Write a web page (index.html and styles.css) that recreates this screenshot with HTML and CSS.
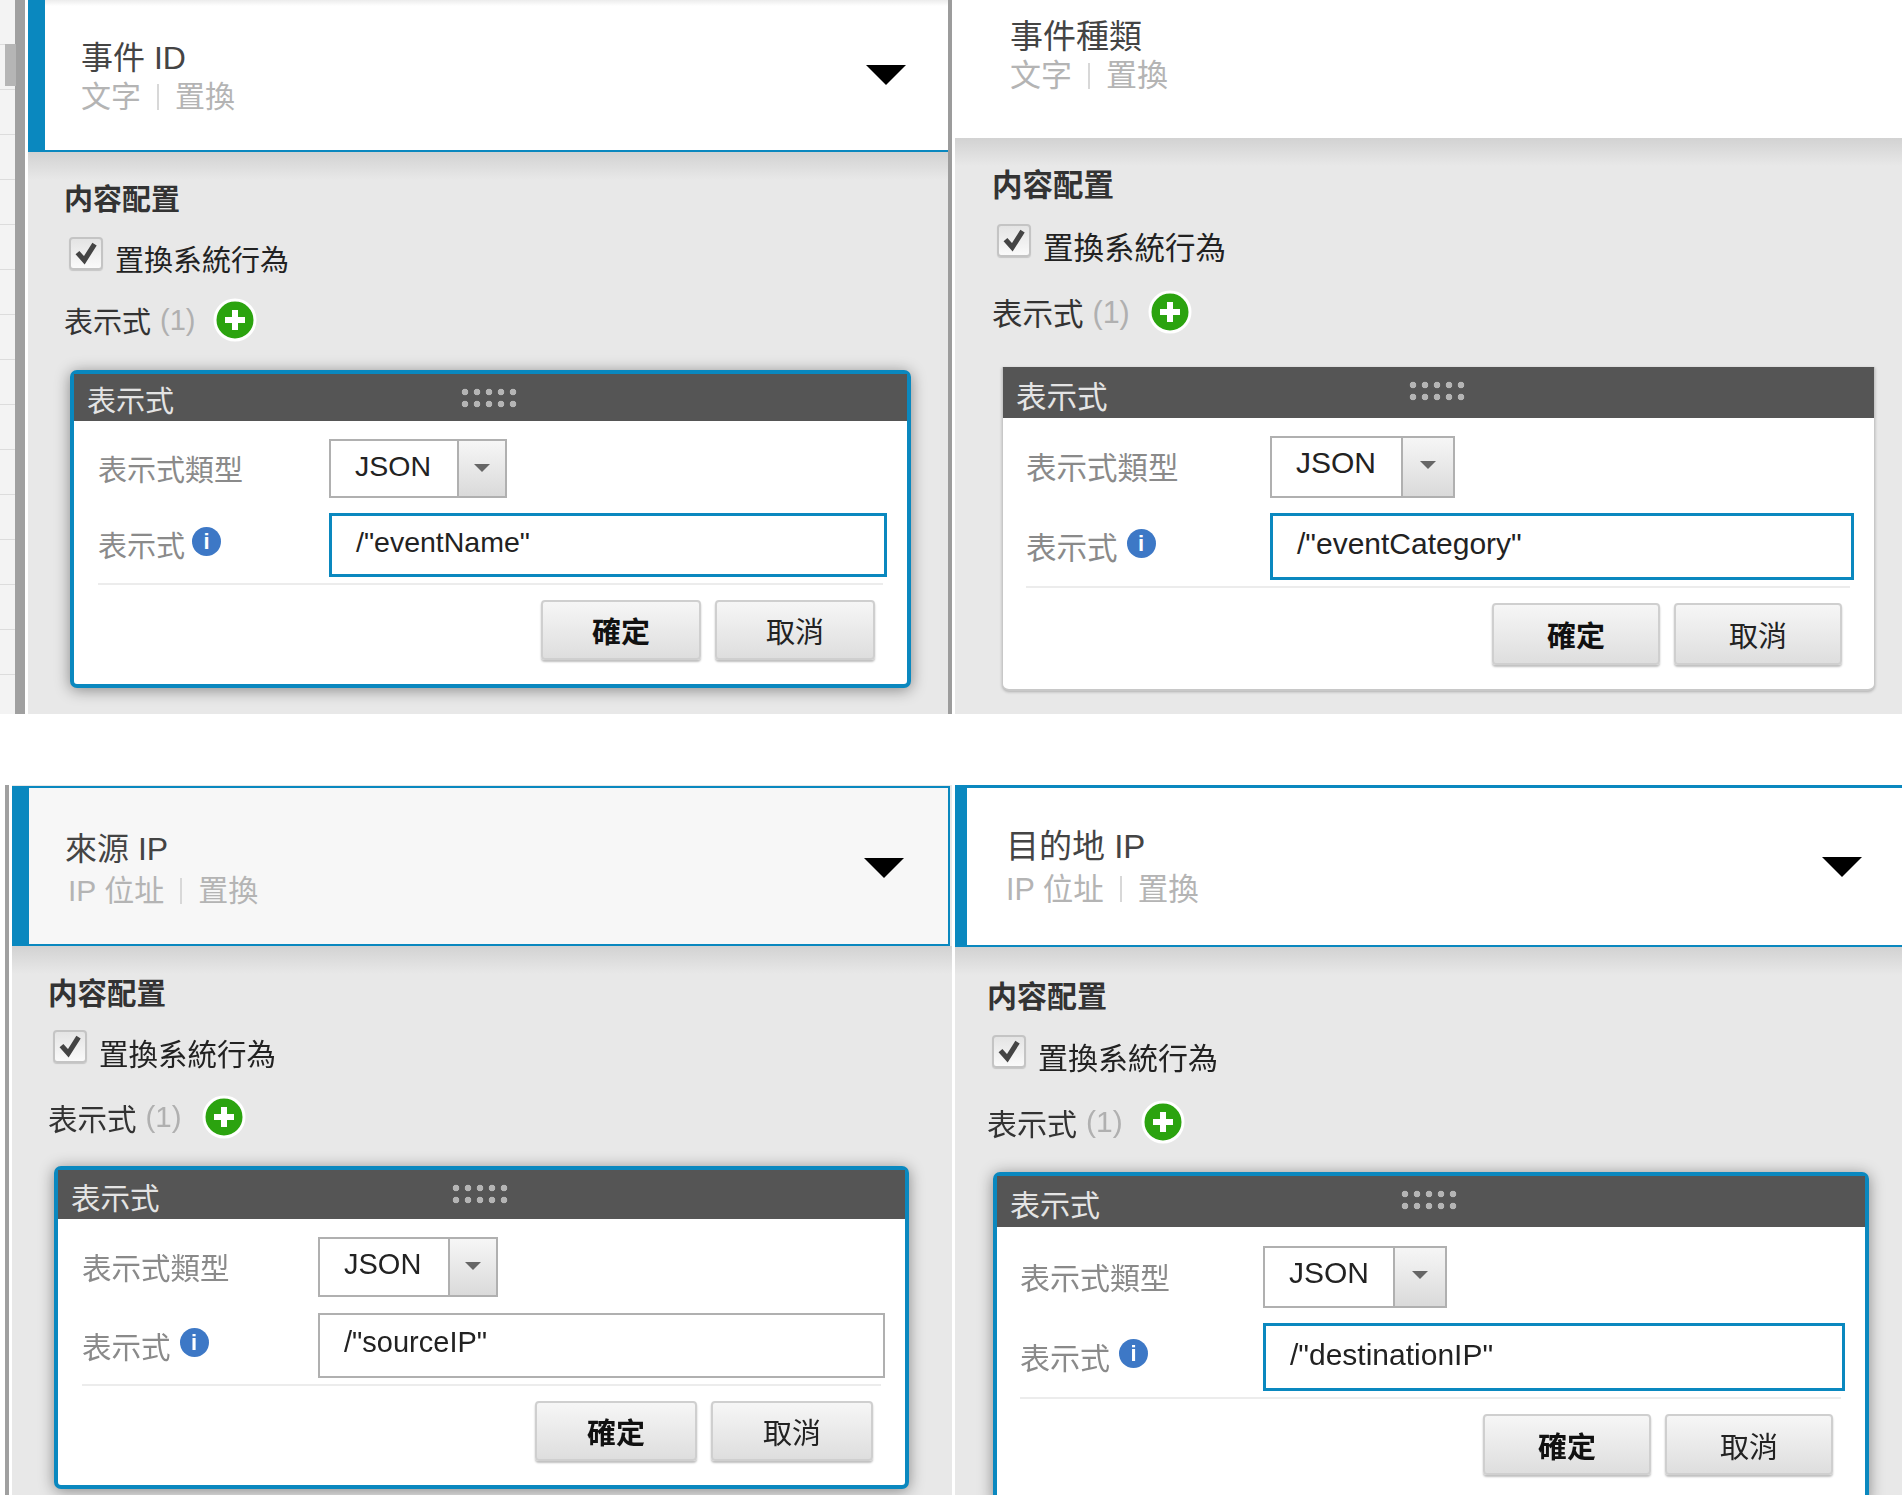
FILE: index.html
```html
<!DOCTYPE html>
<html lang="zh-Hant">
<head>
    <meta charset="UTF-8">
    <title>事件內容配置</title>
    <link rel="stylesheet" href="styles.css">
</head>
<body>
    <div class="page">
        <div class="cell cell-one">
            <div class="strip strip-table"></div>
            <section class="panel panel-one">
                <div class="panel-head">
                    <div class="head-text">
                        <div class="head-title">事件 ID</div>
                        <div class="head-sub"><span>文字</span><i></i><span>置換</span></div>
                    </div>
                    <div class="head-arrow"></div>
                </div>
                <div class="panel-body">
                    <div class="section-title">内容配置</div>
                    <div class="check-row">
                        <span class="check"><svg viewBox="0 0 34 34"><path d="M7 16l8 9L27 6" /></svg></span>
                        <span class="check-label">置換系統行為</span>
                    </div>
                    <div class="expr-row">
                        <span class="expr-label">表示式</span>
                        <span class="expr-count">(1)</span>
                        <button class="add-btn"><svg viewBox="0 0 44 44"><circle cx="22" cy="22" r="20" /><path d="M22 12v20M12 22h20" /></svg></button>
                    </div>
                    <div class="card">
                        <div class="card-head">
                            <span class="card-title">表示式</span>
                            <span class="grip"></span>
                        </div>
                        <div class="card-body">
                            <div class="form-row row-type">
                                <span class="form-label">表示式類型</span>
                                <div class="select"><span class="select-value">JSON</span><span class="select-btn"></span></div>
                            </div>
                            <div class="form-row row-expr">
                                <span class="form-label">表示式<span class="info">i</span></span>
                                <div class="field">/"eventName"</div>
                            </div>
                            <div class="form-divider"></div>
                            <div class="form-actions">
                                <button class="btn btn-primary">確定</button>
                                <button class="btn">取消</button>
                            </div>
                        </div>
                    </div>
                </div>
            </section>
        </div>

        <div class="cell cell-two">
            <section class="panel panel-two">
                <div class="panel-head">
                    <div class="head-text">
                        <div class="head-title">事件種類</div>
                        <div class="head-sub"><span>文字</span><i></i><span>置換</span></div>
                    </div>
                </div>
                <div class="panel-body">
                    <div class="section-title">内容配置</div>
                    <div class="check-row">
                        <span class="check"><svg viewBox="0 0 34 34"><path d="M7 16l8 9L27 6" /></svg></span>
                        <span class="check-label">置換系統行為</span>
                    </div>
                    <div class="expr-row">
                        <span class="expr-label">表示式</span>
                        <span class="expr-count">(1)</span>
                        <button class="add-btn"><svg viewBox="0 0 44 44"><circle cx="22" cy="22" r="20" /><path d="M22 12v20M12 22h20" /></svg></button>
                    </div>
                    <div class="card">
                        <div class="card-head">
                            <span class="card-title">表示式</span>
                            <span class="grip"></span>
                        </div>
                        <div class="card-body">
                            <div class="form-row row-type">
                                <span class="form-label">表示式類型</span>
                                <div class="select"><span class="select-value">JSON</span><span class="select-btn"></span></div>
                            </div>
                            <div class="form-row row-expr">
                                <span class="form-label">表示式<span class="info">i</span></span>
                                <div class="field">/"eventCategory"</div>
                            </div>
                            <div class="form-divider"></div>
                            <div class="form-actions">
                                <button class="btn btn-primary">確定</button>
                                <button class="btn">取消</button>
                            </div>
                        </div>
                    </div>
                </div>
            </section>
        </div>

        <div class="cell cell-three">
            <div class="strip strip-line"></div>
            <section class="panel panel-three">
                <div class="panel-head">
                    <div class="head-text">
                        <div class="head-title">來源 IP</div>
                        <div class="head-sub"><span>IP 位址</span><i></i><span>置換</span></div>
                    </div>
                    <div class="head-arrow"></div>
                </div>
                <div class="panel-body">
                    <div class="section-title">内容配置</div>
                    <div class="check-row">
                        <span class="check"><svg viewBox="0 0 34 34"><path d="M7 16l8 9L27 6" /></svg></span>
                        <span class="check-label">置換系統行為</span>
                    </div>
                    <div class="expr-row">
                        <span class="expr-label">表示式</span>
                        <span class="expr-count">(1)</span>
                        <button class="add-btn"><svg viewBox="0 0 44 44"><circle cx="22" cy="22" r="20" /><path d="M22 12v20M12 22h20" /></svg></button>
                    </div>
                    <div class="card">
                        <div class="card-head">
                            <span class="card-title">表示式</span>
                            <span class="grip"></span>
                        </div>
                        <div class="card-body">
                            <div class="form-row row-type">
                                <span class="form-label">表示式類型</span>
                                <div class="select"><span class="select-value">JSON</span><span class="select-btn"></span></div>
                            </div>
                            <div class="form-row row-expr">
                                <span class="form-label">表示式<span class="info">i</span></span>
                                <div class="field">/"sourceIP"</div>
                            </div>
                            <div class="form-divider"></div>
                            <div class="form-actions">
                                <button class="btn btn-primary">確定</button>
                                <button class="btn">取消</button>
                            </div>
                        </div>
                    </div>
                </div>
            </section>
        </div>

        <div class="cell cell-four">
            <section class="panel panel-four">
                <div class="panel-head">
                    <div class="head-text">
                        <div class="head-title">目的地 IP</div>
                        <div class="head-sub"><span>IP 位址</span><i></i><span>置換</span></div>
                    </div>
                    <div class="head-arrow"></div>
                </div>
                <div class="panel-body">
                    <div class="section-title">内容配置</div>
                    <div class="check-row">
                        <span class="check"><svg viewBox="0 0 34 34"><path d="M7 16l8 9L27 6" /></svg></span>
                        <span class="check-label">置換系統行為</span>
                    </div>
                    <div class="expr-row">
                        <span class="expr-label">表示式</span>
                        <span class="expr-count">(1)</span>
                        <button class="add-btn"><svg viewBox="0 0 44 44"><circle cx="22" cy="22" r="20" /><path d="M22 12v20M12 22h20" /></svg></button>
                    </div>
                    <div class="card">
                        <div class="card-head">
                            <span class="card-title">表示式</span>
                            <span class="grip"></span>
                        </div>
                        <div class="card-body">
                            <div class="form-row row-type">
                                <span class="form-label">表示式類型</span>
                                <div class="select"><span class="select-value">JSON</span><span class="select-btn"></span></div>
                            </div>
                            <div class="form-row row-expr">
                                <span class="form-label">表示式<span class="info">i</span></span>
                                <div class="field">/"destinationIP"</div>
                            </div>
                            <div class="form-divider"></div>
                            <div class="form-actions">
                                <button class="btn btn-primary">確定</button>
                                <button class="btn">取消</button>
                            </div>
                        </div>
                    </div>
                </div>
            </section>
        </div>
    </div>
</body>
</html>
```

FILE: styles.css
```css
html, body {
    margin: 0;
    height: 100%;
    background: #ffffff;
    overflow: hidden;
}
body {
    font-family: "Liberation Sans", "Noto Sans CJK TC", sans-serif;
    color: #222222;
}
.page {
    display: grid;
    grid-template-columns: 955px 947px;
    grid-template-rows: 714px 710px;
    row-gap: 71px;
    width: 1902px;
    filter: blur(0.55px);
}
.cell {
    display: flex;
    min-width: 0;
    overflow: hidden;
}

/* each panel was captured at a slightly different zoom, so sizes live here */
.panel-one {
    --fs: 29px;
    --title-fs: 32px;
    --sub-fs: 30px;
    --val-fs: 28.5px;
    --val-lh: 52px;
    --sub-gap: 4px;
    --bar: 17px;
    --head-h: 152px;
    --head-pad: 36px;
    --body-top: 33px;
    --body-left: 36px;
    --check-gap: 23px;
    --expr-gap: 26px;
    --card-gap: 30px;
    --card-left: 6px;
    --card-w: 841px;
    --card-head: 47px;
    --form-left: 24px;
    --form-top: 18px;
    --label-w: 231px;
    --select-w: 178px;
    --select-btn: 46px;
    --info-gap: 7px;
    --row-a: 59px;
    --row-b: 64px;
    --btn-w: 160px;
    --btn-h: 60px;
    --arrow-right: 42px;
    --add-left: 18px;
    width: 920px;
}
.panel-two {
    --fs: 30.5px;
    --title-fs: 33px;
    --sub-fs: 31px;
    --val-fs: 30px;
    --val-lh: 56px;
    --sub-gap: 4px;
    --bar: 0px;
    --head-h: 138px;
    --head-pad: 55px;
    --body-top: 32px;
    --body-left: 37px;
    --check-gap: 25px;
    --expr-gap: 31px;
    --card-gap: 35px;
    --card-left: 10px;
    --card-w: 873px;
    --card-head: 51px;
    --form-left: 23px;
    --form-top: 18px;
    --label-w: 244px;
    --select-w: 185px;
    --select-btn: 50px;
    --info-gap: 9px;
    --row-a: 62px;
    --row-b: 67px;
    --btn-w: 168px;
    --btn-h: 62px;
    --arrow-right: 0px;
    --add-left: 18px;
    width: 947px;
}
.panel-three {
    --fs: 29.5px;
    --title-fs: 32px;
    --sub-fs: 30px;
    --val-fs: 29px;
    --val-lh: 55px;
    --sub-gap: 7px;
    --bar: 17px;
    --head-h: 160px;
    --head-pad: 36px;
    --body-top: 33px;
    --body-left: 36px;
    --check-gap: 22px;
    --expr-gap: 30px;
    --card-gap: 29px;
    --card-left: 6px;
    --card-w: 855px;
    --card-head: 49px;
    --form-left: 24px;
    --form-top: 18px;
    --label-w: 236px;
    --select-w: 180px;
    --select-btn: 46px;
    --info-gap: 9px;
    --row-a: 60px;
    --row-b: 65px;
    --btn-w: 162px;
    --btn-h: 60px;
    --arrow-right: 44px;
    --add-left: 20px;
    width: 943px;
}
.panel-four {
    --fs: 30px;
    --title-fs: 33px;
    --sub-fs: 30.5px;
    --val-fs: 30px;
    --val-lh: 58px;
    --sub-gap: 7px;
    --bar: 12px;
    --head-h: 162px;
    --head-pad: 39px;
    --body-top: 35px;
    --body-left: 32px;
    --check-gap: 24px;
    --expr-gap: 30px;
    --card-gap: 30px;
    --card-left: 6px;
    --card-w: 876px;
    --card-head: 51px;
    --form-left: 23px;
    --form-top: 19px;
    --label-w: 243px;
    --select-w: 184px;
    --select-btn: 50px;
    --info-gap: 9px;
    --row-a: 62px;
    --row-b: 68px;
    --btn-w: 168px;
    --btn-h: 61px;
    --arrow-right: 40px;
    --add-left: 18px;
    width: 947px;
}

.strip {
    flex: none;
}
.strip-table {
    width: 25px;
    margin-right: 3px;
    background:
        linear-gradient(#b5b5b5, #b5b5b5) 5px 44px / 11px 42px no-repeat,
        linear-gradient(#a0a0a0, #a0a0a0) 15px 0 / 10px 100% no-repeat,
        repeating-linear-gradient(#f3f3f3 0 44px, #dcdcdc 44px 45px);
}
.strip-line {
    width: 9px;
    margin-right: 3px;
    background: linear-gradient(#a0a0a0, #a0a0a0) 5px 0 / 4px 100% no-repeat;
}
.cell-one {
    box-sizing: border-box;
    width: 952px;
    border-right: 4px solid #9c9c9c;
}
.cell-two {
    grid-column: 2;
}
.cell-three {
    width: 952px;
}

.panel {
    display: flex;
    flex-direction: column;
    flex: none;
    background: #e8e8e8;
}
.panel-head {
    display: flex;
    align-items: center;
    justify-content: space-between;
    box-sizing: border-box;
    flex: none;
    height: var(--head-h);
    padding-left: var(--head-pad);
    padding-right: var(--arrow-right);
    background: #ffffff;
    border-left: var(--bar) solid #0a88bf;
    border-bottom: 2px solid #0a88bf;
}
.panel-one .panel-head {
    background: linear-gradient(#ececec, #ffffff 6px);
}
.panel-two .panel-head {
    align-items: flex-start;
    padding-top: 19px;
    border-bottom: 0;
    box-shadow: 0 1px 2px rgba(0, 0, 0, 0.3);
}
.panel-three .panel-head {
    margin: 1px 5px 0 0;
    background: #f7f7f7;
    border: 2px solid #0a88bf;
    border-left: var(--bar) solid #0a88bf;
}
.panel-four .panel-head {
    border-top: 3px solid #0a88bf;
}
.head-text {
    padding-top: var(--sub-gap);
}
.panel-two .head-text {
    padding-top: 0;
}
.panel-four .head-text {
    margin-top: -5px;
}
.head-title {
    font-size: var(--title-fs);
    line-height: 36px;
    color: #444444;
}
.head-sub {
    display: flex;
    align-items: center;
    margin-top: var(--sub-gap);
    font-size: var(--sub-fs);
    line-height: 34px;
    color: #b4b4b4;
}
.panel-three .head-sub {
    margin-left: 3px;
}
.head-sub i {
    width: 2px;
    height: 26px;
    margin: 0 16px;
    background: #d8d8d8;
}
.head-arrow {
    width: 0;
    height: 0;
    border-left: 20px solid transparent;
    border-right: 20px solid transparent;
    border-top: 20px solid #000000;
}
.panel-three .head-arrow {
    margin-top: 3px;
}

.panel-body {
    flex: 1;
    padding: var(--body-top) 0 0 var(--body-left);
    background: linear-gradient(#d2d2d2, #e8e8e8 28px);
}
.section-title {
    font-size: var(--fs);
    line-height: 30px;
    font-weight: bold;
    color: #333333;
}
.check-row {
    display: flex;
    align-items: center;
    height: 36px;
    margin-top: var(--check-gap);
    padding-left: 5px;
}
.check {
    box-sizing: border-box;
    flex: none;
    width: 34px;
    height: 33px;
    margin: -6px 12px 0 0;
    background: linear-gradient(#e4e4e4, #fafafa);
    border: 2px solid #c4c4c4;
    border-radius: 4px;
    box-shadow: 0 1px 1px rgba(0, 0, 0, 0.15);
}
.check svg {
    display: block;
    width: 30px;
    height: 29px;
}
.check path {
    fill: none;
    stroke: #444444;
    stroke-width: 6;
}
.check-label {
    padding-top: 9px;
    font-size: var(--fs);
    line-height: 36px;
    color: #222222;
}
.panel-three .check-label {
    padding-top: 12px;
}
.expr-row {
    display: flex;
    align-items: center;
    height: 40px;
    margin-top: var(--expr-gap);
}
.expr-label {
    font-size: var(--fs);
    color: #333333;
}
.expr-count {
    margin-left: 9px;
    font-size: var(--fs);
    color: #b0b0b0;
}
.add-btn {
    flex: none;
    width: 44px;
    height: 44px;
    margin-left: var(--add-left);
    padding: 0;
    background: none;
    border: 0;
}
.add-btn svg {
    display: block;
}
.add-btn circle {
    fill: #2ba30f;
    stroke: #ffffff;
    stroke-width: 3;
}
.add-btn path {
    fill: none;
    stroke: #ffffff;
    stroke-width: 6;
}

.card {
    box-sizing: border-box;
    width: var(--card-w);
    margin: var(--card-gap) 0 0 var(--card-left);
    background: #ffffff;
    border: 4px solid #0a88bf;
    border-radius: 7px;
    box-shadow: 0 2px 15px rgba(0, 0, 0, 0.42);
}
.panel-two .card {
    border: 1px solid #c8c8c8;
    border-top: 0;
    border-bottom-width: 2px;
    border-radius: 0 0 7px 7px;
    box-shadow: 0 1px 3px rgba(0, 0, 0, 0.25);
}
.card-head {
    position: relative;
    display: flex;
    align-items: center;
    height: var(--card-head);
    padding-left: 13px;
    background: #555555;
}
.card-title {
    margin-top: 8px;
    font-size: var(--fs);
    line-height: 36px;
    color: #e4e4e4;
}
.grip {
    position: absolute;
    left: 50%;
    top: 12px;
    width: 60px;
    height: 24px;
    margin-left: -32px;
    background: radial-gradient(circle, #b4b4b4 0 3px, transparent 3.6px) 0 0 / 12px 12px;
}
.card-body {
    padding: var(--form-top) 20px 24px var(--form-left);
}
.form-row {
    display: flex;
    align-items: center;
}
.row-type {
    height: var(--row-a);
}
.row-expr {
    height: var(--row-b);
    margin-top: 15px;
}
.panel-three .row-expr {
    margin-top: 16px;
}
.form-label {
    display: flex;
    align-items: center;
    flex: none;
    width: var(--label-w);
    padding-bottom: 2px;
    font-size: var(--fs);
    color: #8a8a8a;
}
.info {
    width: 29px;
    height: 29px;
    margin: -5px 0 0 var(--info-gap);
    border-radius: 50%;
    background: #3d78c6;
    color: #ffffff;
    font-size: 22px;
    font-weight: bold;
    line-height: 29px;
    text-align: center;
}
.select {
    display: flex;
    box-sizing: border-box;
    width: var(--select-w);
    height: 100%;
    border: 2px solid #b0b0b0;
    background: #ffffff;
}
.select-value {
    flex: 1;
    padding-left: 24px;
    font-size: var(--val-fs);
    line-height: 50px;
    color: #222222;
}
.select-btn {
    position: relative;
    flex: none;
    width: var(--select-btn);
    background: linear-gradient(#f6f6f6, #dadada);
    border-left: 2px solid #b0b0b0;
}
.select-btn::after {
    content: "";
    position: absolute;
    left: calc(50% - 8px);
    top: 23px;
    border-left: 8px solid transparent;
    border-right: 8px solid transparent;
    border-top: 8px solid #666666;
}
.field {
    box-sizing: border-box;
    flex: 1;
    height: 100%;
    padding-left: 24px;
    border: 3px solid #0a88bf;
    font-size: var(--val-fs);
    line-height: var(--val-lh);
    color: #222222;
}
.panel-three .field {
    border: 2px solid #b0b0b0;
}
.form-divider {
    height: 2px;
    margin: 6px 4px 0 0;
    background: #ececec;
}
.form-actions {
    display: flex;
    justify-content: flex-end;
    gap: 14px;
    margin: 15px 12px 0 0;
}
.btn {
    width: var(--btn-w);
    height: var(--btn-h);
    background: linear-gradient(#f6f6f6, #dedede);
    border: 2px solid #cfcfcf;
    border-radius: 4px;
    box-shadow: 0 2px 2px rgba(0, 0, 0, 0.25);
    font-family: inherit;
    font-size: 29px;
    color: #222222;
}
.btn-primary {
    font-weight: bold;
    color: #111111;
}
```
